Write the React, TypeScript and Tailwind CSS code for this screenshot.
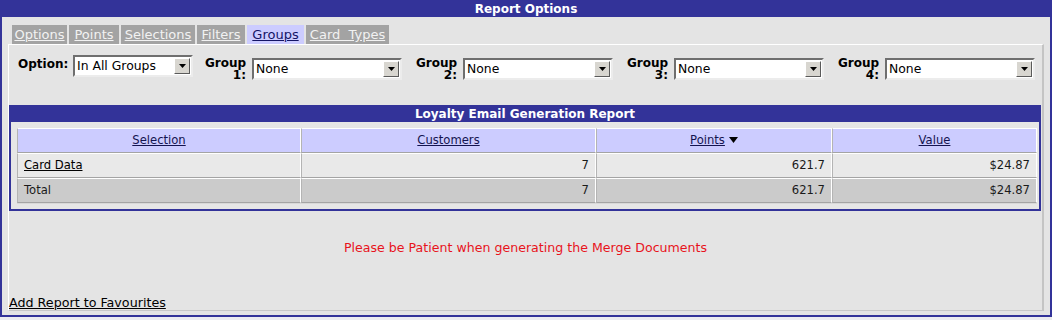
import React from 'react';

const font = "font-['DejaVu_Sans',Verdana,sans-serif]";

const tabs = [
  { label: 'Options', w: 'w-[55px]' },
  { label: 'Points', w: 'w-[50px]' },
  { label: 'Selections', w: 'w-[74px]' },
  { label: 'Filters', w: 'w-[48px]' },
  { label: 'Groups', w: 'w-[57px]' },
  { label: 'Card  Types', w: 'w-[83px]' },
];

const Select = ({ width, value }: { width: string; value: string }) => (
  <div
    className={`${width} h-[22px] bg-white flex items-center justify-between border-2 border-t-[#6f6f6f] border-l-[#6f6f6f] border-r-[#ececec] border-b-[#ececec]`}
  >
    <span className="pl-[2px] text-[12.4px] leading-[14px] text-black">{value}</span>
    <div className="w-[16px] h-[16px] mr-[1px] bg-[#d8d6d0] flex items-center justify-center border border-t-white border-l-white border-r-[#5a5a5a] border-b-[#5a5a5a]">
      <svg width="7" height="4" viewBox="0 0 7 4">
        <path d="M0 0h7L3.5 4z" fill="#000" />
      </svg>
    </div>
  </div>
);

const GroupField = ({ n }: { n: number }) => (
  <div className="flex items-start ml-[14px]">
    <div className="w-[41px] text-right font-bold text-[12px] leading-[12px] text-black mt-[2px]">
      <div>Group</div>
      <div>{n}:</div>
    </div>
    <div className="ml-[6px] mt-[3px]">
      <Select width="w-[150px]" value="None" />
    </div>
  </div>
);

const cell = 'border border-t-white border-l-[#b4b4b4] border-b-[#a4a4a4] border-r-white h-[25px] px-[6px] text-[11.6px]';

export default function App() {
  return (
    <div className={`w-[1052px] h-[320px] bg-[#ececf0] ${font}`}>
      <div className="w-[1052px] h-[317px] border-2 border-[#333399] bg-[#e4e4e4] flex flex-col">
        <div className="h-[15px] bg-[#333399] text-white font-bold text-[12px] leading-[15px] text-center">
          Report Options
        </div>

        <div className="flex-1 flex flex-col pl-[6px] pr-[6px] pt-[8px] pb-[4px]">
          <div className="flex gap-[2px] ml-[4px] h-[19px]">
            {tabs.map((t) => (
              <div
                key={t.label}
                className={`${t.w} text-center text-[13px] leading-[19px] underline whitespace-pre ${
                  t.label === 'Groups' ? 'bg-[#ccccff] text-[#141466]' : 'bg-[#a3a3a3] text-[#f2f2f2]'
                }`}
              >
                {t.label}
              </div>
            ))}
          </div>

          <div className="flex-1 flex flex-col border-t border-l border-t-white border-l-white border-r-2 border-r-[#c4c4c4] border-b border-b-[#c8c8c8]">
            <div className="flex items-start h-[27px] mt-[10px] pl-[9px]">
              <div className="w-[50px] font-bold text-[12px] leading-[14px] text-black mt-[2px]">Option:</div>
              <div className="ml-[5px]">
                <Select width="w-[120px]" value="In All Groups" />
              </div>
              <div className="-ml-[2px] flex">
                <GroupField n={1} />
                <GroupField n={2} />
                <GroupField n={3} />
                <GroupField n={4} />
              </div>
            </div>

            <div className="mt-[23px] mr-[1px] border-2 border-[#333399] bg-[#e6e6e6] pb-[5px]">
              <div className="h-[15px] bg-[#333399] text-white font-bold text-[12px] leading-[15px] text-center">
                Loyalty Email Generation Report
              </div>
              <div className="pl-[6px] pt-[6px]">
                <table className="w-[1020px] border-separate border-spacing-0 border-b border-b-[#d8d8d8]">
                  <thead>
                    <tr className="bg-[#ccccff] text-[#141450]">
                      <th className={`${cell} w-[284px] font-normal`}>
                        <span className="underline">Selection</span>
                      </th>
                      <th className={`${cell} w-[295px] font-normal`}>
                        <span className="underline">Customers</span>
                      </th>
                      <th className={`${cell} w-[236px] font-normal`}>
                        <span className="inline-flex items-center gap-[4px]">
                          <span className="underline">Points</span>
                          <svg width="9" height="6" viewBox="0 0 9 6">
                            <path d="M0 0h9L4.5 6z" fill="#000" />
                          </svg>
                        </span>
                      </th>
                      <th className={`${cell} font-normal`}>
                        <span className="underline">Value</span>
                      </th>
                    </tr>
                  </thead>
                  <tbody className="text-[#1a1a1a]">
                    <tr className="bg-[#e9e9e9]">
                      <td className={`${cell} text-left`}>
                        <span className="underline text-black">Card Data</span>
                      </td>
                      <td className={`${cell} text-right`}>7</td>
                      <td className={`${cell} text-right`}>621.7</td>
                      <td className={`${cell} text-right`}>$24.87</td>
                    </tr>
                    <tr className="bg-[#cbcbcb]">
                      <td className={`${cell} text-left`}>Total</td>
                      <td className={`${cell} text-right`}>7</td>
                      <td className={`${cell} text-right`}>621.7</td>
                      <td className={`${cell} text-right`}>$24.87</td>
                    </tr>
                  </tbody>
                </table>
              </div>
            </div>

            <div className="mt-[29px] text-center text-[12.6px] leading-[15px] text-[#e8141c]">
              Please be Patient when generating the Merge Documents
            </div>

            <div className="mt-auto text-[12.7px] leading-[15px] text-black">
              <span className="underline">Add Report to Favourites</span>
            </div>
          </div>
        </div>
      </div>
    </div>
  );
}
